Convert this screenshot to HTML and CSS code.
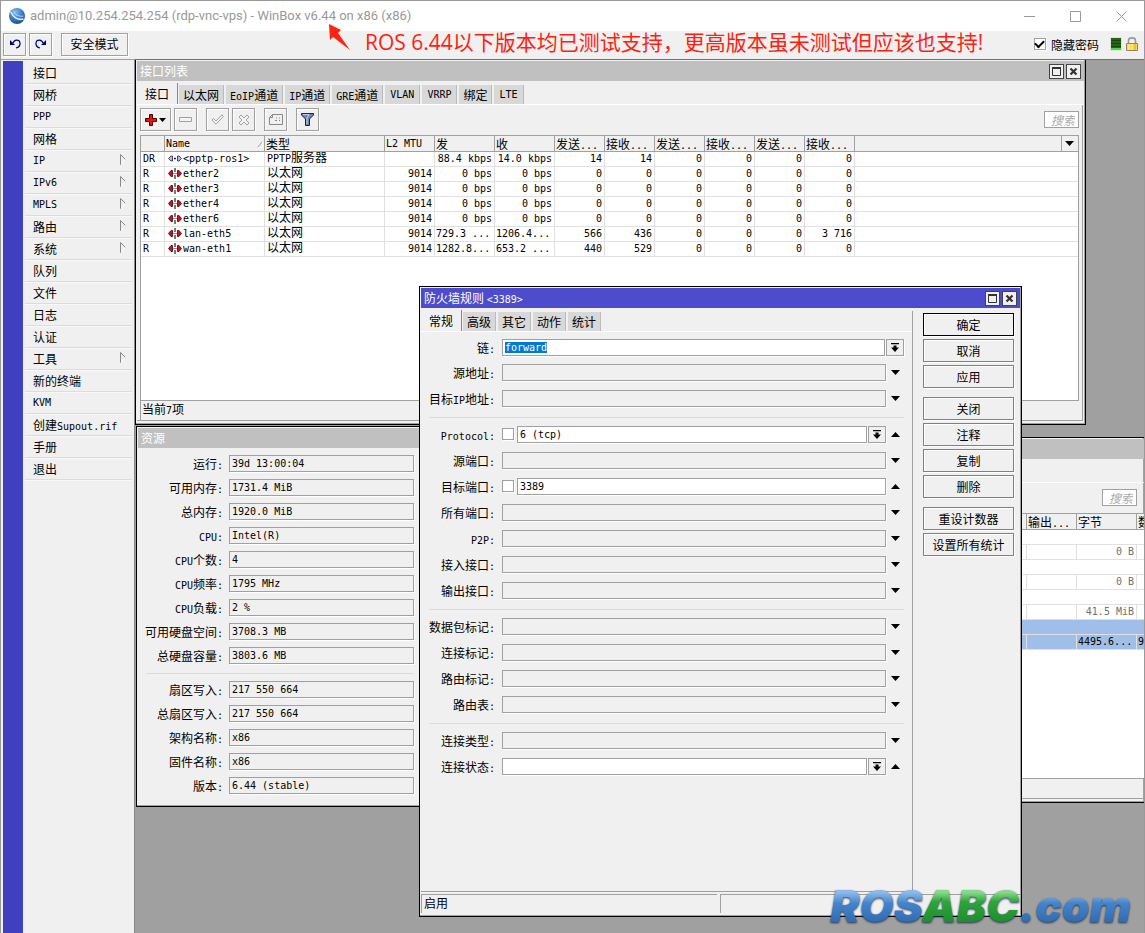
FILE: index.html
```html
<!DOCTYPE html>
<html lang="zh-CN">
<head>
<meta charset="utf-8">
<title>WinBox</title>
<link rel="stylesheet" href="styles.css">
</head>
<body>
<svg class="defs" aria-hidden="true">
  <symbol id="eth" viewBox="0 0 14 11"><path d="M.5 5.500 3 2.500H4.500V8.500H3Z" fill="#d01020" stroke="#400" stroke-width=".8"/><path d="M13.500 5.500 11 2.500H9.500V8.500H11Z" fill="#d01020" stroke="#400" stroke-width=".8"/><path d="M7 0V4M7 7V11M5.500 5.500H6.500M7.500 5.500H8.500" stroke="#222" stroke-width="1.200"/></symbol>
  <symbol id="ppp" viewBox="0 0 14 11"><path d="M0.5 5.5 3 3H4.500V8H3ZM13.500 5.500 11 3H9.500V8H11Z" fill="#b8b8e8" stroke="#335" stroke-width=".9"/><path d="M6 5.500H8" stroke="#222" stroke-width="1.400"/></symbol>
  <symbol id="down" viewBox="0 0 9 5"><path d="M0 0H9L4.500 5Z"/></symbol>
  <symbol id="up" viewBox="0 0 9 5"><path d="M0 5H9L4.500 0Z"/></symbol>
  <symbol id="combo" viewBox="0 0 8 9"><path d="M0 0H8V1.200H0ZM2.500 2.500H5.500V4.500H8L4 9 0 4.500H2.500Z"/></symbol>
  <symbol id="max" viewBox="0 0 9 9"><path d="M.5.5H8.500V8.500H.5Z" fill="none" stroke="#333"/><path d="M0 1H9" stroke="#333" stroke-width="2"/></symbol>
  <symbol id="close" viewBox="0 0 9 9"><path d="M1.500 1.500 7.500 7.500M7.500 1.500 1.500 7.500" stroke="#333" stroke-width="2.200" fill="none"/></symbol>
  <symbol id="sub" viewBox="0 0 6 11"><path d="M.5 11V.5L5.500 5.500" fill="none" stroke="#888"/><path d="M5.500 5.500 1 10.500" fill="none" stroke="#fff"/></symbol>
</svg>
<div class="shell">
  <header class="titlebar">
    <svg class="logo" viewBox="0 0 16 16"><defs><radialGradient id="ball" cx=".4" cy=".25" r=".8"><stop offset="0" stop-color="#7db8ee"/><stop offset="1" stop-color="#0b4c9c"/></radialGradient></defs><circle cx="8" cy="8" r="8" fill="url(#ball)"/><path d="M2 4C4 9.500 9 12.500 14.500 11" fill="none" stroke="#dcecfb" stroke-width="1.700"/><path d="M4.500 2.500C5.500 7 10 9 14.500 8" fill="none" stroke="#a9cff4" stroke-width="1.200"/></svg>
    <h1>admin@10.254.254.254 (rdp-vnc-vps) - WinBox v6.44 on x86 (x86)</h1>
    <div class="sysbtns">
      <button aria-label="最小化"><svg viewBox="0 0 11 11"><path d="M0 5.500H11"/></svg></button>
      <button aria-label="最大化"><svg viewBox="0 0 11 11"><path d="M.5.5H10.500V10.500H.5Z"/></svg></button>
      <button aria-label="关闭"><svg viewBox="0 0 11 11"><path d="M.5.5 10.500 10.500M10.500.5.5 10.500"/></svg></button>
    </div>
  </header>

  <div class="topbar">
    <button class="tb sq" aria-label="撤销"><svg width="12" height="10" viewBox="0 0 12 10"><path d="M1 1V6H6Z" fill="#00007c"/><path d="M4 4C5 .5 10.500 0 11 4 11.300 7 9 8.500 7 9" fill="none" stroke="#00007c" stroke-width="1.200"/></svg></button>
    <button class="tb sq" aria-label="重做"><svg width="12" height="10" viewBox="0 0 12 10"><path d="M11 1V6H6Z" fill="#00007c"/><path d="M8 4C7 .5 1.500 0 1 4 .7 7 3 8.500 5 9" fill="none" stroke="#00007c" stroke-width="1.200"/></svg></button>
    <button class="tb safe">安全模式</button>
    <p class="note">ROS 6.44以下版本均已测试支持，更高版本虽未测试但应该也支持!</p>
    <label class="hide"><input type="checkbox" class="cb" checked>隐藏密码</label>
    <span class="meter"></span>
    <svg class="lock" viewBox="0 0 12 14"><path d="M2.500 6V3.500C2.500 0 9.500 0 9.500 3.500V6" fill="none" stroke="#999" stroke-width="1.600"/><path d="M.5 6.500H11.500V13.500H.5Z" fill="#ffd84a" stroke="#8f8468"/><path d="M3 7V13M6 7V13" stroke="#fff0a8"/><path d="M9 7V13" stroke="#dca71c"/></svg>
    <svg class="pointer" viewBox="0 0 22 29"><path d="M0 1 12 7 9 10 21 27 4 14 1 17Z" fill="#ff2314"/></svg>
  </div>

  <div class="main">
    <nav class="side">
      <ul>
        <li><button>接口</button></li>
        <li><button>网桥</button></li>
        <li><button class="m">PPP</button></li>
        <li><button>网格</button></li>
        <li><button class="m">IP<svg><use href="#sub"/></svg></button></li>
        <li><button class="m">IPv6<svg><use href="#sub"/></svg></button></li>
        <li><button class="m">MPLS<svg><use href="#sub"/></svg></button></li>
        <li><button>路由<svg><use href="#sub"/></svg></button></li>
        <li><button>系统<svg><use href="#sub"/></svg></button></li>
        <li><button>队列</button></li>
        <li><button>文件</button></li>
        <li><button>日志</button></li>
        <li><button>认证</button></li>
        <li><button>工具<svg><use href="#sub"/></svg></button></li>
        <li><button>新的终端</button></li>
        <li><button class="m">KVM</button></li>
        <li><button>创建<span class="m">Supout.rif</span></button></li>
        <li><button>手册</button></li>
        <li><button>退出</button></li>
      </ul>
    </nav>

    <main class="desk">
      <section class="win w-list">
        <div class="cap"><h2>接口列表</h2><button aria-label="最大化"><svg><use href="#max"/></svg></button><button aria-label="关闭"><svg><use href="#close"/></svg></button></div>
        <div class="tabs">
          <button class="on">接口</button><button>以太网</button><button><span class="m">EoIP</span>通道</button><button><span class="m">IP</span>通道</button><button><span class="m">GRE</span>通道</button><button class="m">VLAN</button><button class="m">VRRP</button><button>绑定</button><button class="m">LTE</button>
        </div>
        <div class="pane">
          <div class="tools">
            <button class="tb add" aria-label="添加"><svg width="22" height="12" viewBox="0 0 22 12"><path d="M4.500.5H7.500V4.500H11.500V7.500H7.500V11.500H4.500V7.500H.5V4.500H4.500Z" fill="#f01010" stroke="#400"/><path d="M14 4H21L17.500 8Z"/></svg></button>
            <button class="tb sq sep" aria-label="删除"><svg width="13" height="5" viewBox="0 0 13 5"><path d="M.5.5H12.500V4.500H.5Z" fill="#f4f4f4" stroke="#a0a0a0"/></svg></button>
            <button class="tb sq" aria-label="启用"><svg width="13" height="11" viewBox="0 0 13 11"><path d="M.8 6 2.500 4.500 5 7 11 .8 12.300 2.500 5 10.200Z" fill="#f4f4f4" stroke="#a0a0a0"/></svg></button>
            <button class="tb sq sep" aria-label="禁用"><svg width="12" height="12" viewBox="0 0 12 12"><path d="M1 3 3 1 6 4 9 1 11 3 8 6 11 9 9 11 6 8 3 11 1 9 4 6Z" fill="#f4f4f4" stroke="#a0a0a0"/></svg></button>
            <button class="tb sq sep" aria-label="注释"><svg width="14" height="11" viewBox="0 0 14 11"><path d="M3.500.5H13.500V10.500H.5V3.500ZM3.500.5V3.500H.5M7 4H8M10 4H11M6 6.500H8M10 6.500H11" fill="none" stroke="#888"/></svg></button>
            <button class="tb sq" aria-label="过滤"><svg width="13" height="13" viewBox="0 0 13 13"><path d="M.5.500H12.500V2L8.500 6V12.500H4.500V6L.5 2Z" fill="#7286b4" stroke="#1b2338"/><path d="M2 1.500H8L6 5V11" fill="none" stroke="#c2cfea"/></svg></button>
            <input class="find" type="text" placeholder="搜索" aria-label="搜索">
          </div>
          <div class="frame">
            <table class="grid">
              <colgroup><col class="c24"><col class="c100"><col class="c120"><col class="c50"><col class="c60"><col class="c60"><col class="c50"><col class="c50"><col class="c50"><col class="c50"><col class="c50"><col class="c50"><col><col class="c16"></colgroup>
              <thead><tr><th></th><th class="m sort">Name<svg viewBox="0 0 6 7"><path d="M.5 6.500 5.500.5" stroke="#999" fill="none"/><path d="M5.500.5V6.500H.5" stroke="#fff" fill="none"/></svg></th><th>类型</th><th class="m">L2 MTU</th><th>发</th><th>收</th><th>发送<span class="m">...</span></th><th>接收<span class="m">...</span></th><th>发送<span class="m">...</span></th><th>接收<span class="m">...</span></th><th>发送<span class="m">...</span></th><th>接收<span class="m">...</span></th><th></th><th class="pick"><svg class="tri"><use href="#down"/></svg></th></tr></thead>
              <tbody>
                <tr><td>DR</td><td><svg class="if"><use href="#ppp"/></svg>&lt;pptp-ros1&gt;</td><td>PPTP<span class="cj">服务器</span></td><td></td><td>88.4 kbps</td><td>14.0 kbps</td><td>14</td><td>14</td><td>0</td><td>0</td><td>0</td><td>0</td><td colspan="2"></td></tr>
                <tr><td>R</td><td><svg class="if"><use href="#eth"/></svg>ether2</td><td><span class="cj">以太网</span></td><td>9014</td><td>0 bps</td><td>0 bps</td><td>0</td><td>0</td><td>0</td><td>0</td><td>0</td><td>0</td><td colspan="2"></td></tr>
                <tr><td>R</td><td><svg class="if"><use href="#eth"/></svg>ether3</td><td><span class="cj">以太网</span></td><td>9014</td><td>0 bps</td><td>0 bps</td><td>0</td><td>0</td><td>0</td><td>0</td><td>0</td><td>0</td><td colspan="2"></td></tr>
                <tr><td>R</td><td><svg class="if"><use href="#eth"/></svg>ether4</td><td><span class="cj">以太网</span></td><td>9014</td><td>0 bps</td><td>0 bps</td><td>0</td><td>0</td><td>0</td><td>0</td><td>0</td><td>0</td><td colspan="2"></td></tr>
                <tr><td>R</td><td><svg class="if"><use href="#eth"/></svg>ether6</td><td><span class="cj">以太网</span></td><td>9014</td><td>0 bps</td><td>0 bps</td><td>0</td><td>0</td><td>0</td><td>0</td><td>0</td><td>0</td><td colspan="2"></td></tr>
                <tr><td>R</td><td><svg class="if"><use href="#eth"/></svg>lan-eth5</td><td><span class="cj">以太网</span></td><td>9014</td><td class="cut">729.3 ...</td><td class="cut">1206.4...</td><td>566</td><td>436</td><td>0</td><td>0</td><td>0</td><td>3 716</td><td colspan="2"></td></tr>
                <tr><td>R</td><td><svg class="if"><use href="#eth"/></svg>wan-eth1</td><td><span class="cj">以太网</span></td><td>9014</td><td class="cut">1282.8...</td><td class="cut">653.2 ...</td><td>440</td><td>529</td><td>0</td><td>0</td><td>0</td><td>0</td><td colspan="2"></td></tr>
              </tbody>
            </table>
          </div>
          <div class="count">当前<span class="m">7</span>项</div>
        </div>
      </section>

      <section class="win w-rules">
        <div class="cap"></div>
        <div class="tabs"></div>
        <div class="pane">
          <div class="tools"><input class="find" type="text" placeholder="搜索" aria-label="搜索"></div>
          <div class="frame">
            <table class="grid stats">
              <colgroup><col class="c16"><col class="c50"><col class="c60"><col></colgroup>
              <thead><tr><th></th><th>输出<span class="m">...</span></th><th>字节</th><th>数</th></tr></thead>
              <tbody>
                <tr><td colspan="4"></td></tr>
                <tr><td></td><td></td><td>0 B</td><td></td></tr>
                <tr><td colspan="4"></td></tr>
                <tr><td></td><td></td><td>0 B</td><td></td></tr>
                <tr><td colspan="4"></td></tr>
                <tr><td></td><td></td><td>41.5 MiB</td><td></td></tr>
                <tr class="hl"><td colspan="4"></td></tr>
                <tr class="hl"><td></td><td></td><td class="cut">4495.6...</td><td class="cut">9</td></tr>
              </tbody>
            </table>
          </div>
          <div class="count"></div>
        </div>
      </section>

      <section class="win w-res">
        <div class="cap"><h2>资源</h2></div>
        <div class="res">
          <label for="r1">运行</label><input id="r1" readonly value="39d 13:00:04">
          <label for="r2">可用内存</label><input id="r2" readonly value="1731.4 MiB">
          <label for="r3">总内存</label><input id="r3" readonly value="1920.0 MiB">
          <label for="r4"><span class="m">CPU</span></label><input id="r4" readonly value="Intel(R)">
          <label for="r5"><span class="m">CPU</span>个数</label><input id="r5" readonly value="4">
          <label for="r6"><span class="m">CPU</span>频率</label><input id="r6" readonly value="1795 MHz">
          <label for="r7"><span class="m">CPU</span>负载</label><input id="r7" readonly value="2 %">
          <label for="r8">可用硬盘空间</label><input id="r8" readonly value="3708.3 MB">
          <label for="r9">总硬盘容量</label><input id="r9" readonly value="3803.6 MB">
          <hr>
          <label for="r10">扇区写入</label><input id="r10" readonly value="217 550 664">
          <label for="r11">总扇区写入</label><input id="r11" readonly value="217 550 664">
          <label for="r12">架构名称</label><input id="r12" readonly value="x86">
          <label for="r13">固件名称</label><input id="r13" readonly value="x86">
          <label for="r14">版本</label><input id="r14" readonly value="6.44 (stable)">
        </div>
      </section>

      <section class="win w-fw">
        <div class="cap"><h2>防火墙规则 <span class="m">&lt;3389&gt;</span></h2><button aria-label="最大化"><svg><use href="#max"/></svg></button><button aria-label="关闭"><svg><use href="#close"/></svg></button></div>
        <div class="split">
          <div class="left">
            <div class="tabs"><button class="on">常规</button><button>高级</button><button>其它</button><button>动作</button><button>统计</button></div>
            <form class="form">
              <div class="row wide"><label for="f1">链</label><input id="f1" class="ed" value="forward"><button type="button" class="dd" aria-label="选择"><svg><use href="#combo"/></svg></button></div>
              <div class="row"><label for="f2">源地址</label><input id="f2" readonly><button type="button" class="fold" aria-label="展开"><svg><use href="#down"/></svg></button></div>
              <div class="row"><label for="f3">目标<span class="m">IP</span>地址</label><input id="f3" readonly><button type="button" class="fold" aria-label="展开"><svg><use href="#down"/></svg></button></div>
              <hr>
              <div class="row"><label for="f4"><span class="m">Protocol</span></label><input type="checkbox" class="cb" aria-label="取反"><input id="f4" class="ed" value="6 (tcp)"><button type="button" class="dd" aria-label="选择"><svg><use href="#combo"/></svg></button><button type="button" class="fold" aria-label="收起"><svg><use href="#up"/></svg></button></div>
              <div class="row"><label for="f5">源端口</label><input id="f5" readonly><button type="button" class="fold" aria-label="展开"><svg><use href="#down"/></svg></button></div>
              <div class="row"><label for="f6">目标端口</label><input type="checkbox" class="cb" aria-label="取反"><input id="f6" class="ed" value="3389"><button type="button" class="fold" aria-label="收起"><svg><use href="#up"/></svg></button></div>
              <div class="row"><label for="f7">所有端口</label><input id="f7" readonly><button type="button" class="fold" aria-label="展开"><svg><use href="#down"/></svg></button></div>
              <div class="row"><label for="f8"><span class="m">P2P</span></label><input id="f8" readonly><button type="button" class="fold" aria-label="展开"><svg><use href="#down"/></svg></button></div>
              <div class="row"><label for="f9">接入接口</label><input id="f9" readonly><button type="button" class="fold" aria-label="展开"><svg><use href="#down"/></svg></button></div>
              <div class="row"><label for="f10">输出接口</label><input id="f10" readonly><button type="button" class="fold" aria-label="展开"><svg><use href="#down"/></svg></button></div>
              <hr>
              <div class="row"><label for="f11">数据包标记</label><input id="f11" readonly><button type="button" class="fold" aria-label="展开"><svg><use href="#down"/></svg></button></div>
              <div class="row"><label for="f12">连接标记</label><input id="f12" readonly><button type="button" class="fold" aria-label="展开"><svg><use href="#down"/></svg></button></div>
              <div class="row"><label for="f13">路由标记</label><input id="f13" readonly><button type="button" class="fold" aria-label="展开"><svg><use href="#down"/></svg></button></div>
              <div class="row"><label for="f14">路由表</label><input id="f14" readonly><button type="button" class="fold" aria-label="展开"><svg><use href="#down"/></svg></button></div>
              <hr>
              <div class="row"><label for="f15">连接类型</label><input id="f15" readonly><button type="button" class="fold" aria-label="展开"><svg><use href="#down"/></svg></button></div>
              <div class="row"><label for="f16">连接状态</label><input id="f16" class="ed"><button type="button" class="dd" aria-label="选择"><svg><use href="#combo"/></svg></button><button type="button" class="fold" aria-label="收起"><svg><use href="#up"/></svg></button></div>
            </form>
          </div>
          <div class="acts">
            <div><button class="def">确定</button><button>取消</button><button>应用</button></div>
            <div><button>关闭</button><button>注释</button><button>复制</button><button>删除</button></div>
            <div><button>重设计数器</button><button>设置所有统计</button></div>
          </div>
        </div>
        <div class="foot"><span>启用</span><span></span></div>
      </section>

      <div class="brand"><span class="blue">ROS</span><span class="green">ABC</span><span class="blue">.com</span></div>
    </main>
  </div>
</div>
<script src="script.js"></script>
</body>
</html>
```
FILE: script.js
```js
const chain = document.getElementById("f1");
chain.focus();
chain.select();
```
FILE: styles.css
```css
* { box-sizing: border-box; }
body, h1, h2, p, ul { margin: 0; padding: 0; }
body, button, input {
  font-family: "Noto Sans CJK SC", "Liberation Sans", sans-serif;
  font-size: 12px;
  font-weight: 400;
  color: #000;
}
button { background: none; border: 0; padding: 0; line-height: 16px; }
.m, button.m, input { font-family: "DejaVu Sans Mono", "Liberation Mono", monospace; font-size: 10px; }
span.m { line-height: 0; }
.defs { display: none; }

.shell {
  min-height: 100vh;
  display: flex;
  flex-direction: column;
  background: #f0f0f0;
  border: 1px solid #999;
  border-bottom: 0;
}

.titlebar { height: 30px; display: flex; align-items: center; background: #fff; padding-left: 8px; gap: 5px; }
.logo { width: 16px; height: 16px; flex: none; }
.titlebar h1 { flex: 1; font: 400 13px/28px Roboto, "Open Sans", sans-serif; color: #999; white-space: nowrap; }
.sysbtns { display: flex; }
.sysbtns button { width: 46px; height: 28px; display: grid; place-items: center; }
.sysbtns svg { width: 11px; height: 11px; fill: none; stroke: #999; }

.topbar { position: relative; height: 28px; display: flex; align-items: center; padding: 0 6px 2px 2px; gap: 3px; }
.tb {
  height: 23px;
  display: grid;
  place-items: center;
  flex: none;
  border: 1px solid #a0a0a0;
  box-shadow: 1px 1px #fff, inset 1px 1px #fff;
}
.sq { width: 23px; }
.safe { width: 67px; margin-left: 6px; }
.note { flex: 1; margin-left: 234px; padding-bottom: 4px; white-space: nowrap; font: 400 21px/22px "Open Sans", "Noto Sans CJK SC", sans-serif; color: #ff1e10; }
.hide { display: flex; align-items: center; gap: 5px; margin-right: 8px; white-space: nowrap; }
.cb { appearance: none; width: 12px; height: 12px; margin: 0; flex: none; background: #fff; border: 1px solid #a0a0a0; box-shadow: 1px 1px #fff; display: grid; place-items: center; }
.cb:checked::before { content: ""; width: 7px; height: 4px; margin-bottom: 2px; border: solid #000; border-width: 0 0 2px 2px; transform: rotate(-45deg); }
.meter { width: 12px; height: 14px; margin-right: 1px; border: 1px solid #e0e0e0; background: linear-gradient(#0000 10px, #3fe03f 10px), repeating-linear-gradient(#286418 0 2px, #14480c 2px 3px); }
.lock { width: 12px; height: 14px; }
.pointer { position: absolute; left: 328px; top: -8px; width: 22px; height: 29px; }

.main { flex: 1; display: flex; }
.side { width: 134px; flex: none; border-top: 1px solid #a0a0a0; border-right: 1px solid #888; padding: 1px 2px 0; }
.side ul { list-style: none; min-height: 100%; border-left: 20px solid #3f3fbf; padding: 1px 0 0 2px; }
.side li { border-bottom: 1px solid #dcdcdc; box-shadow: 0 1px #f8f8f8; }
.side button { position: relative; display: block; width: 100%; height: 21px; padding-left: 8px; text-align: left; line-height: 20px; }
.side button.m { line-height: 22px; }
.side svg { position: absolute; right: 6px; top: 4px; width: 6px; height: 11px; }
.desk { flex: 1; position: relative; background: #a0a0a0; overflow: hidden; border-top: 1px solid #707070; }

.win { position: absolute; display: flex; flex-direction: column; border: 1px solid #000; padding: 1px; background: #f0f0f0; box-shadow: inset -1px -1px #a0a0a0; }
.w-list { left: 0; right: 58px; top: -1px; }
.w-rules { left: 870px; right: 0; top: 377px; border-right: 0; padding-right: 0; }
.w-res { left: 1px; width: 292px; top: 366px; }
.w-fw { left: 284px; right: 122px; top: 226px; bottom: 16px; }
.cap { height: 20px; display: flex; align-items: center; gap: 2px; padding: 0 3px; background: #c0c0c0; }
.w-fw .cap { background: #4c4ccc; margin-bottom: 3px; }
.cap h2 { flex: 1; font-size: 12px; line-height: 20px; font-weight: 400; color: #fff; }
.cap button { width: 15px; height: 15px; display: grid; place-items: center; border: 1px solid #444; background: #f0f0f0; }
.cap svg { width: 9px; height: 9px; }

.tabs { height: 24px; display: flex; align-items: flex-end; border-bottom: 1px solid #fff; }
.w-fw .tabs { height: 21px; }
.tabs button { height: 19px; padding: 0 4px; background: #d8d8d8; border-right: 1px solid #bbb; margin-right: 2px; line-height: 19px; white-space: nowrap; }
.tabs button.on { height: 21px; padding: 0 8px; margin-right: 1px; background: #f0f0f0; border-right-color: #888; line-height: 18px; }
.tabs button.m { padding: 0 5px; }

.pane { padding: 3px 3px 0; margin-right: 1px; border-right: 1px solid #a0a0a0; border-bottom: 1px solid #a0a0a0; margin-bottom: 2px; }
.tools { height: 27px; display: flex; align-items: flex-start; gap: 3px; }
.add { width: 31px; }
.sep { margin-right: 6px; }
.find { width: 35px; height: 17px; margin: 3px 0 0 auto; padding: 0 3px; text-align: right; font: italic 12px/15px "Noto Sans CJK SC", sans-serif; border: 1px solid #a0a0a0; background: #fff; border-radius: 0; }
.find::placeholder { color: #aaa; }
.frame { height: 266px; background: #fff; border: 1px solid #a0a0a0; overflow: hidden; }
.grid { width: 100%; table-layout: fixed; border-collapse: separate; border-spacing: 0; }
.c16 { width: 16px; } .c24 { width: 24px; } .c50 { width: 50px; } .c60 { width: 60px; } .c100 { width: 100px; } .c120 { width: 120px; }
.grid th, .grid td { padding: 0 2px; white-space: nowrap; }
.grid th { height: 16px; line-height: 15px; font-weight: 400; text-align: left; background: #f0f0f0; border-right: 1px solid #a0a0a0; border-bottom: 1px solid #a0a0a0; }
.grid th:not(.pick) { padding-left: 1px; padding-right: 1px; }
.grid th:last-child { border-right: 0; }
.grid td { height: 15px; line-height: 14px; font-family: "DejaVu Sans Mono", monospace; font-size: 10px; text-align: right; border-right: 1px solid #e0e0e0; border-bottom: 1px solid #e0e0e0; }
.grid td:last-child { border-right: 0; }
.grid td:nth-child(-n+3), .grid td.cut { text-align: left; }
.grid td.cut { padding-left: 1px; padding-right: 0; }
.cj { font-family: "Noto Sans CJK SC", sans-serif; font-size: 12px; line-height: 0; }
.sort svg { width: 6px; height: 7px; float: right; margin-top: 5px; }
.grid th.pick { padding: 5px 3px; line-height: 5px; }
.tri { width: 9px; height: 5px; display: block; }
.if { width: 14px; height: 11px; vertical-align: -2px; margin: 0 1px; }
.grid.stats td:nth-child(3) { text-align: right; color: #707070; }
.grid.stats td.cut:nth-child(3) { text-align: left; }
.grid.stats .hl td { background: #9fbfea; color: #000; }
.count { height: 19px; padding-left: 1px; line-height: 15px; border-left: 1px solid #a0a0a0; }
.w-rules .find { margin: 3px 4px 0 auto; }
.w-rules .frame { border-right: 0; margin-right: -3px; }
.w-rules .pane { margin-right: 0; border-right: 0; }

.res { display: grid; grid-template-columns: 80px 1fr; gap: 7px 6px; padding: 7px 12px 11px 5px; }
label::after { content: ":"; font-family: "DejaVu Sans Mono", monospace; font-size: 10px; line-height: 0; }
.hide::after { content: none; }
.res label, .row label { text-align: right; line-height: 17px; white-space: nowrap; }
.res input, .row > input:not(.cb) { height: 17px; min-width: 0; padding: 0 2px; border: 1px solid #a0a0a0; border-radius: 0; background: #f0f0f0; box-shadow: 1px 1px #fff; outline: 0; }
.row > input.ed:not(.cb) { background: #fff; }
input::selection { background: #0078d7; color: #fff; }
hr { border: 0; height: 1px; background: #dcdcdc; margin: 0; }
.res hr { grid-column: 1 / -1; margin: 2px 0 0 3px; }

.split { flex: 1; display: flex; }
.left { flex: 1; display: flex; flex-direction: column; border-right: 1px solid #a0a0a0; border-bottom: 1px solid #a0a0a0; }
.form { display: flex; flex-direction: column; gap: 9px; padding: 7px 8px 0 2px; }
.form hr { margin: 1px 0 -1px 6px; }
.row { display: flex; height: 17px; }
.wide { margin-bottom: -1px; }
.row label { width: 72px; margin-right: 7px; flex: none; }
.row > input:not(.cb) { flex: 1; }
.row .cb { margin: 2px 3px 0 0; }
.dd { width: 18px; height: 17px; margin-left: 1px; display: grid; place-items: center; border: 1px solid #a0a0a0; box-shadow: 1px 1px #fff; }
.dd svg { width: 8px; height: 9px; }
.fold { width: 18px; display: grid; place-items: center; }
.fold svg { width: 9px; height: 5px; }
.acts { width: 107px; display: flex; flex-direction: column; gap: 9px; padding: 2px 6px 0 10px; }
.acts div { display: flex; flex-direction: column; gap: 3px; }
.acts button { height: 23px; border: 1px solid #808080; box-shadow: inset 1px 1px #fff, 1px 1px #fff; }
.acts .def { border-color: #000; }
.foot { display: flex; gap: 3px; height: 23px; padding: 2px 0; }
.foot span { flex: 1 1 0; padding-left: 2px; line-height: 15px; border-left: 1px solid #a0a0a0; border-top: 1px solid #a0a0a0; }
.foot span:last-child { flex-basis: 8px; }

.brand { position: absolute; right: 13px; bottom: 3px; font: italic 900 44px/48px Inter, "Liberation Sans", sans-serif; white-space: nowrap; filter: drop-shadow(0 1px 1px #1a3350); }
.brand span { color: transparent; background-clip: text; -webkit-background-clip: text; }
.blue { background-image: linear-gradient(#8db9e8 25%, #4484cc 45%, #2f68ac 85%); }
.green { background-image: linear-gradient(#86d88a 25%, #2ea53a 42%, #1d8a2c 85%); }
```
